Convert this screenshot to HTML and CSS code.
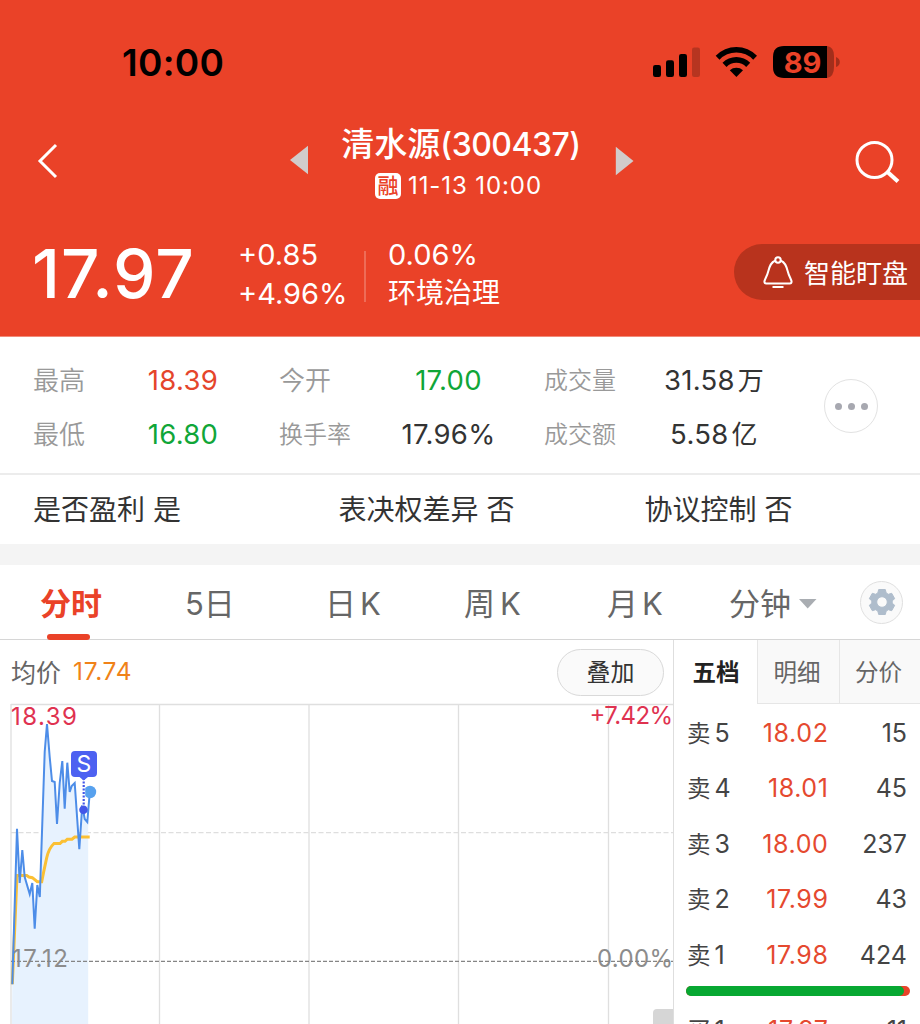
FILE: index.html
```html
<!DOCTYPE html>
<html lang="zh-CN">
<head>
<meta charset="utf-8">
<title>清水源(300437)</title>
<link rel="stylesheet" href="styles.css">
</head>
<body>
<header class="hero">
  <div class="status">
    <span class="clock">10:00</span>
    <svg class="status-icons" width="188" height="34" viewBox="652 44 188 34">
      <rect x="653" y="64" width="8" height="12" rx="2.2"/>
      <rect x="666" y="59.300" width="8" height="16.700" rx="2.200"/>
      <rect x="679" y="53" width="8" height="23" rx="2.200"/>
      <rect x="692" y="46.500" width="8" height="29.500" rx="2.200" fill="#b63520"/>
      <path d="M715.700 54.800A28.500 28.500 0 0 1 757 54.800L753.200 58.800A23 23 0 0 0 719.500 58.800Z"/>
      <path d="M722.500 61.800A19.500 19.500 0 0 1 750.200 61.800L746.200 66A13.800 13.800 0 0 0 726.500 66Z"/>
      <path d="M729.800 69.200A10 10 0 0 1 743 69.200L736.400 76Z"/>
      <path d="M827 45Q834 46 834 55V66Q834 76 827 77Z" fill="#a32e1b"/>
      <path d="M836 56Q839.800 57.500 839.800 61T836 66Z" fill="#a32e1b"/>
      <path d="M784 45H827V77H784Q773 77 773 66V56Q773 45 784 45Z"/>
      <text class="battery" x="802.500" y="71.500" text-anchor="middle">89</text>
    </svg>
  </div>
  <nav class="nav">
    <svg class="back" width="22" height="36" viewBox="0 0 22 36"><path d="M20 2L4 18L20 34" fill="none" stroke="#fff" stroke-width="3"/></svg>
    <svg class="prev" width="19" height="30" viewBox="0 0 19 30"><path d="M0 15L18 .8V29.200Z" fill="#d1cccb"/></svg>
    <div class="title">
      <h1>清水源<span class="code">(300437)</span></h1>
      <div class="sub"><span class="badge">融</span><span class="when">11-13 10:00</span></div>
    </div>
    <svg class="next" width="19" height="30" viewBox="0 0 19 30"><path d="M18.500 15L.8 .8V29.200Z" fill="#d1cccb"/></svg>
    <svg class="search" width="46" height="44" viewBox="0 0 46 44"><circle cx="19.500" cy="19" r="17.500" fill="none" stroke="#fff" stroke-width="3"/><path d="M32.500 31L43 40.500" stroke="#fff" stroke-width="4.200"/></svg>
  </nav>
  <div class="quote">
    <div class="price">17.97</div>
    <div class="pair change"><span>+0.85</span><span>+4.96%</span></div>
    <div class="pair sector"><span>0.06%</span><span class="han">环境治理</span></div>
    <button class="watch">
      <svg width="30" height="32" viewBox="0 0 30 32" fill="none" stroke="#fff" stroke-width="2"><path d="M12.500 4.500C8 6 6.600 10 5.200 15.500C4.300 19.500 1.700 23.500 1.400 25.500Q1.400 27.500 3.200 27.500H26.800Q28.600 27.500 28.600 25.500C28.300 23.500 25.700 19.500 24.800 15.500C23.400 10 22 6 17.500 4.500"/><circle cx="15" cy="4" r="2.700"/><path d="M9.500 31H20.500"/></svg>
      <span>智能盯盘</span>
    </button>
  </div>
</header>

<section class="stats">
  <div class="stat-grid">
    <span class="label">最高</span><span class="val first up">18.39</span>
    <span class="label">今开</span><span class="val second down">17.00</span>
    <span class="label small">成交量</span><span class="val">31.58<i>万</i></span>
    <span class="label">最低</span><span class="val first down">16.80</span>
    <span class="label small">换手率</span><span class="val second">17.96%</span>
    <span class="label small">成交额</span><span class="val">5.58<i>亿</i></span>
  </div>
  <button class="more"><b></b><b></b><b></b></button>
</section>
<section class="facts"><span>是否盈利 是</span><span>表决权差异 否</span><span>协议控制 否</span></section>

<nav class="tabs">
  <a class="tab active">分时</a>
  <a class="tab t2">5<i>日</i></a>
  <a class="tab t3">日<i>K</i></a>
  <a class="tab t4">周<i>K</i></a>
  <a class="tab t5">月<i>K</i></a>
  <a class="tab t6">分钟<svg width="18" height="10" viewBox="0 0 18 10"><path d="M0 0H17.500L8.700 9.500Z" fill="#a9adb2"/></svg></a>
  <span class="gear">
    <svg width="28" height="28" viewBox="-14 -14 28 28" fill="#afbdcc" stroke="#afbdcc" stroke-linejoin="round">
      <path fill-rule="evenodd" d="M-3.300-12.500H3.300L4.200-9L6.400-7.700L9.700-8.700L12.700-3.300L10.200-1.200V1.200L12.700 3.300L9.700 8.700L6.400 7.700L4.200 9L3.300 12.500H-3.300L-4.200 9L-6.400 7.700L-9.700 8.700L-12.700 3.300L-10.200 1.200V-1.200L-12.700-3.300L-9.700-8.700L-6.400-7.700L-4.200-9ZM5.300 0A5.300 5.300 0 1 0-5.300 0A5.300 5.300 0 1 0 5.300 0Z"/>
    </svg>
  </span>
</nav>

<main class="body">
  <section class="chart-col">
    <div class="toolbar"><span class="avg-label">均价</span><span class="avg">17.74</span><button class="overlay">叠加</button></div>
    <svg class="chart" width="673" height="320" viewBox="0 704 673 320">
      <path d="M11 704.500H673M11 704V1024M159.500 704V1024M309 704V1024M458.500 704V1024M608.500 704V1024" stroke="#dfdfdf" stroke-width="1.300" fill="none"/>
      <path d="M11 832.700H673" stroke="#dedede" stroke-width="1.300" stroke-dasharray="5 2.500"/>
      <path d="M12.300 984.300L17 828.700L19.700 883L22.300 850L24.700 877L29.700 894L32.300 883L34.700 928.700L37.300 885L39.800 897L44.700 752L47 724L49.700 757L52 781L54.700 782L57 824L59.700 783L62.300 761L64.700 808.700L67.300 762.700L69.700 792L71.700 786L74.700 783L79.300 849.300L82.300 805L84.700 819L88.200 822V1024H12Z" fill="#e7f2fe"/>
      <path d="M12.300 984.300L17 875.500H26.700L29 877L32.300 877.700L37.300 881.700H41.700L43.700 871.700L46.700 857.700Q49 848 54 843.500H60L62.300 841.300H65L67.300 839.200H72L74.700 837H89.700" fill="none" stroke="#fbc034" stroke-width="3"/>
      <text class="axis mid" x="12" y="966.500" textLength="56">17.12</text>
      <text class="axis mid" x="597" y="966.500" textLength="76">0.00%</text>
      <path d="M11 961.300H673" stroke="#858585" stroke-width="1.300" stroke-dasharray="4 2"/>
      <text class="axis top" x="11" y="725" textLength="66">18.39</text>
      <text class="axis top" x="589.500" y="723.500" textLength="83.500">+7.42%</text>
      <path d="M12.300 984.300L17 828.700L19.700 883L22.300 850L24.700 877L29.700 894L32.300 883L34.700 928.700L37.300 885L39.800 897L44.700 752L47 724L49.700 757L52 781L54.700 782L57 824L59.700 783L62.300 761L64.700 808.700L67.300 762.700L69.700 792L71.700 786L74.700 783L79.300 849.300L82.300 805L84.700 819L87.300 822L89.700 793" fill="none" stroke="#4d8de8" stroke-width="2"/>
      <circle cx="90" cy="792" r="6.200" fill="#57a1ee"/>
      <path d="M83.700 778V807" stroke="#fff" stroke-width="3"/>
      <path d="M83.700 778V807" stroke="#4356e8" stroke-width="2.200" stroke-dasharray="2 1.500"/>
      <circle cx="83.500" cy="809.700" r="4.300" fill="#4356e8"/>
      <path d="M75 751H93Q97 751 97 755V773Q97 777 93 777H88L83.700 780.500L79.500 777H75Q71 777 71 773V755Q71 751 75 751Z" fill="#4d61f1"/>
      <text class="marker" x="84" y="772" text-anchor="middle">S</text>
      <path d="M653 1024V1013Q653 1009 657 1009H673V1024Z" fill="#d6d6d6"/>
    </svg>
  </section>
  <aside class="book">
    <div class="book-tabs"><span class="on">五档</span><span>明细</span><span>分价</span></div>
    <div class="row"><span>卖<i>5</i></span><b>18.02</b><em>15</em></div>
    <div class="row"><span>卖<i>4</i></span><b>18.01</b><em>45</em></div>
    <div class="row"><span>卖<i>3</i></span><b>18.00</b><em>237</em></div>
    <div class="row"><span>卖<i>2</i></span><b>17.99</b><em>43</em></div>
    <div class="row"><span>卖<i>1</i></span><b>17.98</b><em>424</em></div>
    <div class="ratio"><div class="sell"></div></div>
    <div class="row buy"><span>买<i>1</i></span><b>17.97</b><em>11</em></div>
  </aside>
</main>
</body>
</html>
```
FILE: styles.css
```css
* { box-sizing: border-box; }
body {
  margin: 0;
  width: 920px;
  height: 1024px;
  overflow: hidden;
  background: #fff;
  color: #333;
  font-family: Inter, "Noto Sans CJK SC", sans-serif;
  line-height: 1.2;
}
button { font: inherit; border: 0; margin: 0; }
i, em { font-style: normal; }

/* Header */
.hero { height: 337px; background: #ea4228; color: #fff; border-bottom: 1px solid #f28a78; overflow: hidden; }
.status { display: flex; justify-content: space-between; align-items: center; height: 124px; padding: 0 80px 0 122px; }
.clock { color: #000; font-size: 37px; font-weight: 600; letter-spacing: 0.3px; line-height: 40px; padding-top: 1px; }
.battery { font-size: 29px; font-weight: 700; fill: #ea4228; }
.nav { display: flex; align-items: center; height: 80px; padding-left: 36px; }
.back { margin-top: -6px; }
.prev { margin: -8px 0 0 232px; }
.title { width: 306px; text-align: center; }
h1 { margin: 0; padding-right: 2px; font-size: 33px; font-weight: 500; line-height: 42px; height: 43px; white-space: nowrap; }
.code { font-size: 32px; letter-spacing: -0.5px; }
.sub { display: flex; justify-content: center; align-items: center; gap: 7px; height: 40px; padding-right: 8px; }
.badge { width: 26px; height: 26px; border-radius: 5px; background: #fff; color: #ea4228; font-size: 21px; line-height: 25px; text-align: center; font-weight: 500; }
.when { font-size: 24px; letter-spacing: 0.9px; margin-right: -1px; padding-top: 2px; }
.next { margin-top: -7px; }
.search { margin: -2px 0 0 221px; }
.quote { display: flex; height: 132px; padding-left: 32px; }
.price { width: 206px; font-size: 67.500px; font-weight: 500; line-height: 80px; padding-top: 30px; letter-spacing: 1px; }
.pair { display: flex; flex-direction: column; padding-top: 31px; font-size: 29px; line-height: 39px; white-space: nowrap; }
.change { width: 127px; }
.sector { position: relative; padding-left: 23px; width: 369px; }
.sector::before { content: ""; position: absolute; left: -1px; top: 47px; width: 2px; height: 51px; background: #ee6c57; }
.han { font-size: 28px; }
.watch { display: flex; align-items: center; gap: 11px; width: 186px; height: 56px; margin-top: 40px; padding: 0 0 0 29px; border-radius: 28px 0 0 28px; background: #b8331d; color: #fff; font-size: 26px; white-space: nowrap; }
.watch span { padding-top: 3px; }

/* Key figures */
.stats { display: flex; height: 138px; padding: 16px 0 0 33px; border-bottom: 2px solid #ececec; }
.stat-grid { display: grid; grid-template-columns: 90px 156px 90px 175px 90px 160px; grid-template-rows: 54px 54px; align-items: center; }
.label { color: #999; font-size: 26px; font-weight: 350; padding-top: 2px; }
.label.small { font-size: 24px; }
.val { font-size: 27.500px; text-align: center; white-space: nowrap; letter-spacing: 0.3px; line-height: 34px; }
.val i { font-size: 26px; margin-left: 3px; }
.first { padding-right: 36px; }
.second { padding-right: 16px; }
.up { color: #e5452b; }
.down { color: #10a638; }
.more { display: flex; align-items: center; justify-content: center; gap: 6px; width: 54px; height: 54px; margin: 26px 0 0 30px; padding: 0; border: 1.500px solid #e2e2e2; border-radius: 50%; background: #fff; }
.more b { width: 7px; height: 7px; border-radius: 50%; background: #a7a8b0; }
.facts { display: grid; grid-template-columns: 305.500px 306px 1fr; align-items: center; height: 69px; padding: 2px 0 0 33px; font-size: 28px; }

/* Period tabs */
.tabs { display: flex; align-items: center; height: 96px; border-top: 21px solid #f4f4f4; border-bottom: 1px solid #d6d6d6; color: #666; font-size: 31px; }
.tab { display: flex; align-items: center; height: 74px; padding-top: 4px; white-space: nowrap; }
.tab i { margin-left: 4px; }
.active { position: relative; margin-left: 40px; width: 145px; color: #ea4228; font-weight: 600; }
.active::after { content: ""; position: absolute; left: 7px; bottom: -1px; width: 43px; height: 6px; border-radius: 3px; background: #ea4228; }
.t2 { width: 140px; }
.t2 i { margin-left: 0; }
.t3 { width: 139px; }
.t4 { width: 143px; }
.t4 i { margin-left: 5px; }
.t5 { width: 122px; }
.t6 { width: 131px; }
.t6 svg { margin-left: 8px; }
.gear { display: flex; align-items: center; justify-content: center; width: 43px; height: 43px; border: 1px solid #e0e0e0; border-radius: 50%; background: #fafafa; }

/* Chart */
.body { display: flex; height: 384px; }
.chart-col { width: 674px; border-right: 1px solid #dedede; }
.toolbar { display: flex; align-items: center; height: 64px; padding: 0 9px 0 11px; font-size: 25px; }
.avg-label { color: #666; padding-top: 1px; }
.avg { margin-left: 12px; color: #f08219; font-size: 24.500px; letter-spacing: 0.7px; }
.overlay { width: 107px; height: 47px; margin-left: auto; padding: 2px 0 0; border: 1.500px solid #d9d9d9; border-radius: 24px; background: #fafafa; color: #333; font-size: 24px; }
.chart { display: block; overflow: visible; }
.axis { font-size: 24px; }
.mid { fill: #8c8c8c; }
.top { fill: #df3250; }
.marker { font-size: 23px; fill: #fff; }

/* Order book */
.book { width: 246px; }
.book-tabs { display: grid; grid-template-columns: 83px 82px 81px; height: 64px; margin-bottom: 1px; font-size: 23.500px; line-height: 66px; text-align: center; color: #666; }
.book-tabs span { height: 64px; padding-right: 3px; background: #f9f9f9; border-left: 1px solid #e6e6e6; border-bottom: 1px solid #e6e6e6; }
.book-tabs .on { background: #fff; border-color: transparent; color: #222; font-weight: 600; padding-right: 0; }
.row { display: grid; grid-template-columns: 60px 81.500px 78.500px; align-items: center; height: 55.500px; padding-left: 13px; color: #444; font-size: 25px; }
.row span { font-size: 23.500px; }
.row i { font-size: 25px; margin-left: 4px; }
.row b { color: #e5492f; font-weight: 400; text-align: right; letter-spacing: 0.6px; }
.row em { text-align: right; }
.ratio { width: 224px; height: 10px; margin: 3px 0 0 12px; border-radius: 5px; background: #e9432a; overflow: hidden; }
.sell { width: 218px; height: 10px; border-radius: 0 5px 5px 0; background: #07a832; }
.buy { margin-top: 7px; }
```
